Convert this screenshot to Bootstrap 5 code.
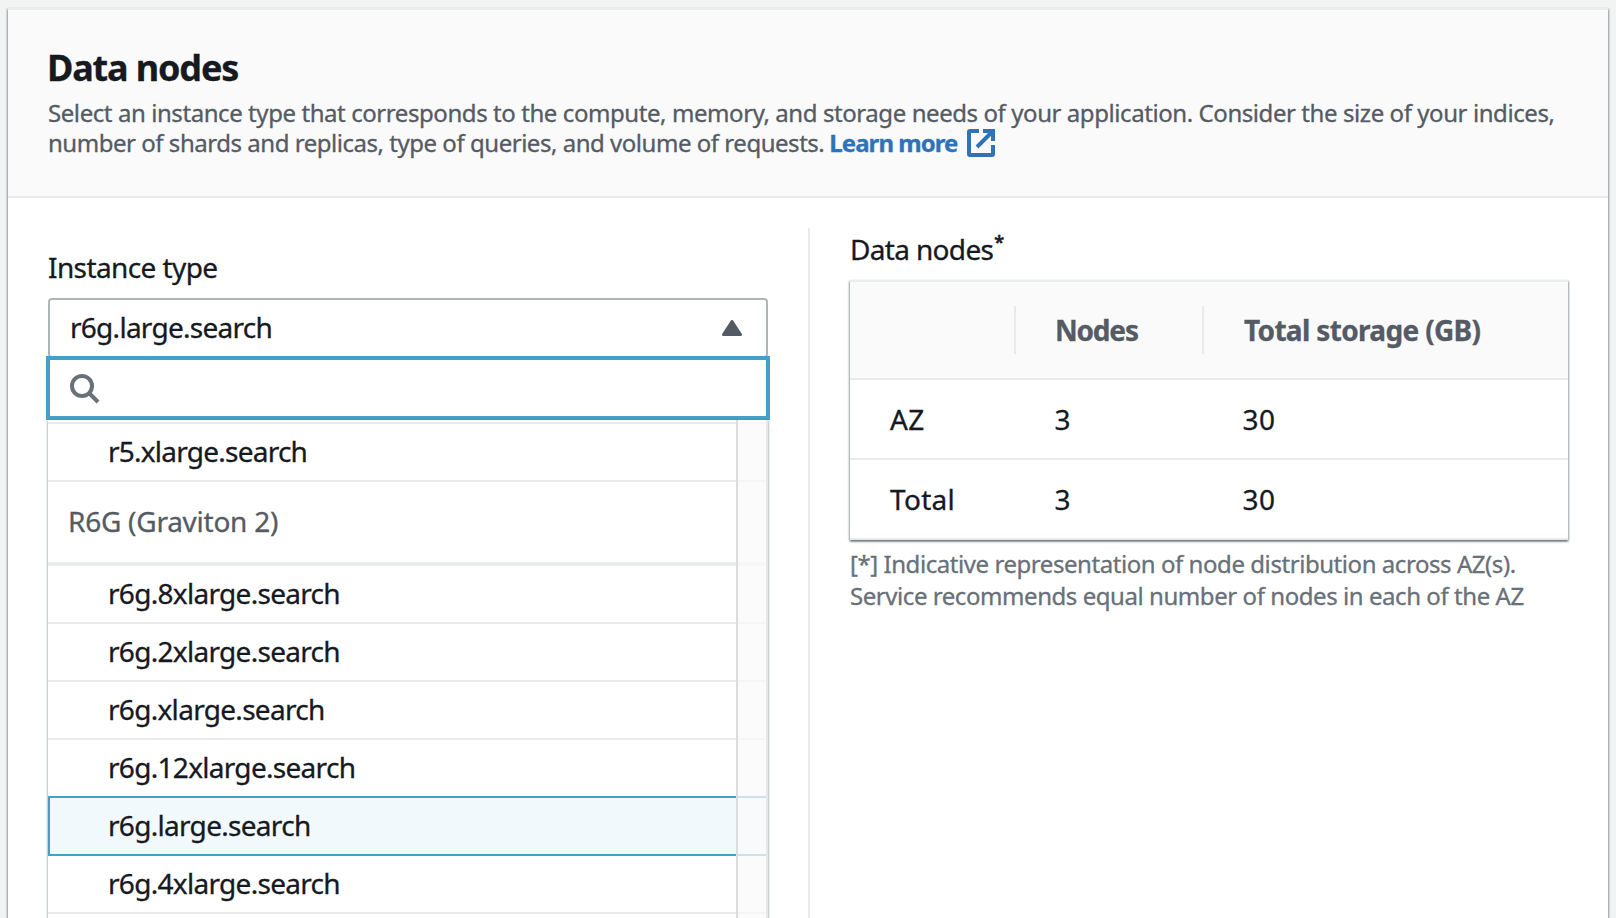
<!DOCTYPE html>
<html lang="en">
<head>
<meta charset="utf-8">
<title>Data nodes</title>
<link href="https://cdn.jsdelivr.net/npm/bootstrap@5.3.0/dist/css/bootstrap.min.css" rel="stylesheet">
<style>
  body { height: 918px; background: #f2f3f3; color: #16191f; font-family: "Noto Sans", sans-serif; font-size: 28px; letter-spacing: -.66px; line-height: 36px; white-space: nowrap; -webkit-text-stroke: .3px; }
  .panel { border-top: 2px solid #eaeded; box-shadow: 0 2px 2px rgba(0,28,36,.3), 1px 1px 2px rgba(0,28,36,.3), -1px 1px 2px rgba(0,28,36,.3); height: 910px; }
  .panel-head { background: #fafafa; border-bottom: 2px solid #eaeaea; height: 188px; padding: 36px 39px 0 40px; }
  .panel-head h1 { font-size: 36px; line-height: 44px; font-weight: 700; letter-spacing: -1.15px; margin: 0 0 8px -1px; }
  .intro { font-size: 24px; line-height: 30px; letter-spacing: -.425px; color: #545b64; }
  .intro .second { letter-spacing: -.47px; }
  .intro a { color: #2e73b8; font-weight: 700; letter-spacing: -.95px; text-decoration: none; }
  .gap-before { margin-left: 5px; }
  .col-left { width: 800px; padding: 51px 40px 0; }
  .col-right { flex: 1; margin-top: 30px; padding: 3px 40px 0 40px; border-left: 2px solid #eaeaea; }
  .field-label { height: 49px; letter-spacing: -.6px; }
  .select-box { height: 60px; margin-bottom: -2px; padding: 0 24px 2px 20px; border: 2px solid #aab7b8; border-radius: 4px; }
  .select-box svg { margin-top: 2px; }
  .select-box span { margin-top: -1px; letter-spacing: -.73px; }
  .search-box { height: 64px; margin: 0 -2px; padding: 1px 0 0 20px; border: 4px solid #44a0c6; background: #fff; }
  .options { box-shadow: 0 0 0 1px rgba(0,28,36,.06), 0 2px 2px 1px rgba(0,28,36,.22); padding-top: 2px; height: 498px; }
  .opt { height: 58px; padding: 9px 0 0 60px; border-bottom: 2px solid #eaeaea; letter-spacing: -.7px; }
  .opt.first-line { height: 60px; border-top: 2px solid #eaeaea; letter-spacing: -.76px; }
  .opt.picked { height: 60px; margin-top: -2px; padding-left: 58px; border: 2px solid #44a0c6; background: #f1f9fd; }
  .opt-group { height: 84px; padding: 21px 0 0 20px; border-bottom: 4px solid #eaeded; color: #545b64; letter-spacing: -.25px; }
  .scroll-track { width: 32px; border-left: 2px solid #dcdcdc; border-right: 2px solid #e8e8e8; background: rgba(250,250,250,.74); }
  .table-label { height: 36px; }
  .node-table { margin-top: 13px; border-top: 2px solid #eaeded; box-shadow: 0 2px 2px rgba(0,28,36,.3), 1px 1px 2px rgba(0,28,36,.3), -1px 1px 2px rgba(0,28,36,.3); background: #fff; }
  .t-head { height: 98px; background: #fafafa; border-bottom: 2px solid #eaeaea; color: #545b64; font-weight: 700; }
  .t-row { height: 80px; border-bottom: 2px solid #eaeaea; }
  .c1 { width: 164px; padding-left: 40px; }
  .c2 { width: 188px; padding-left: 40px; }
  .c3 { flex: 1; padding-left: 40px; }
  .t-head .c2, .t-head .c3 { height: 48px; line-height: 48px; border-left: 2px solid #eaeaea; }
  .t-head .c2 { letter-spacing: -1.2px; padding-left: 39px; }
  .t-row .c2, .t-row .c3 { padding-left: 40.5px; letter-spacing: .6px; }
  .t-row .c1 { letter-spacing: .3px; }
  .note { font-size: 24px; line-height: 32px; letter-spacing: -.44px; color: #687078; margin-top: 8px; }
  .star { font-size: 18px; line-height: 0; top: -11px; margin-left: 1px; -webkit-text-stroke: .7px; }
</style>
</head>
<body class="overflow-hidden p-2 pb-0">
<main class="panel bg-white">
  <header class="panel-head">
    <h1>Data nodes</h1>
    <div class="intro">
      <div>Select an instance type that corresponds to the compute, memory, and storage needs of your application. Consider the size of your indices,</div>
      <div class="d-flex align-items-center second"><span>number of shards and replicas, type of queries, and volume of requests.</span><a href="#" class="d-flex align-items-center gap-before">Learn more
        <svg class="ms-2" width="29" height="28" viewBox="1 0 29 28" fill="none" stroke="currentColor" stroke-width="4"><path d="M14 2H5q-1 0-1 1v22q0 1 1 1h22q1 0 1-1V16"/><path d="M18 2h10v10M27 3 12 18"/></svg></a></div>
    </div>
  </header>
  <div class="d-flex">
    <section class="col-left">
      <div class="field-label">Instance type</div>
      <div class="select-box d-flex align-items-center justify-content-between bg-white">
        <span>r6g.large.search</span>
        <svg width="20" height="16" viewBox="0 0 20 16"><path d="M10 1.5 18.5 14.5H1.5Z" fill="#545b64" stroke="#545b64" stroke-width="3" stroke-linejoin="round"/></svg>
      </div>
      <div class="search-box position-relative d-flex align-items-center">
        <svg width="30" height="30" viewBox="0 0 30 30" fill="none" stroke="#687078" stroke-width="4"><circle cx="12" cy="12" r="10"/><path d="m19 19 9 9"/></svg>
      </div>
      <div class="options position-relative">
        <div class="opt first-line">r5.xlarge.search</div>
        <div class="opt-group">R6G (Graviton 2)</div>
        <div class="opt">r6g.8xlarge.search</div>
        <div class="opt">r6g.2xlarge.search</div>
        <div class="opt">r6g.xlarge.search</div>
        <div class="opt">r6g.12xlarge.search</div>
        <div class="opt picked">r6g.large.search</div>
        <div class="opt">r6g.4xlarge.search</div>
        <div class="scroll-track position-absolute top-0 end-0 h-100"></div>
      </div>
    </section>
    <section class="col-right">
      <div class="table-label">Data nodes<span class="star position-relative">*</span></div>
      <div class="node-table">
        <div class="t-head d-flex align-items-center"><div class="c1"></div><div class="c2">Nodes</div><div class="c3">Total storage (GB)</div></div>
        <div class="t-row d-flex align-items-center"><div class="c1">AZ</div><div class="c2">3</div><div class="c3">30</div></div>
        <div class="t-row d-flex align-items-center"><div class="c1">Total</div><div class="c2">3</div><div class="c3">30</div></div>
      </div>
      <div class="note">[*] Indicative representation of node distribution across AZ(s).<br>Service recommends equal number of nodes in each of the AZ</div>
    </section>
  </div>
</main>
<script src="https://cdn.jsdelivr.net/npm/bootstrap@5.3.0/dist/js/bootstrap.bundle.min.js"></script>
</body>
</html>
